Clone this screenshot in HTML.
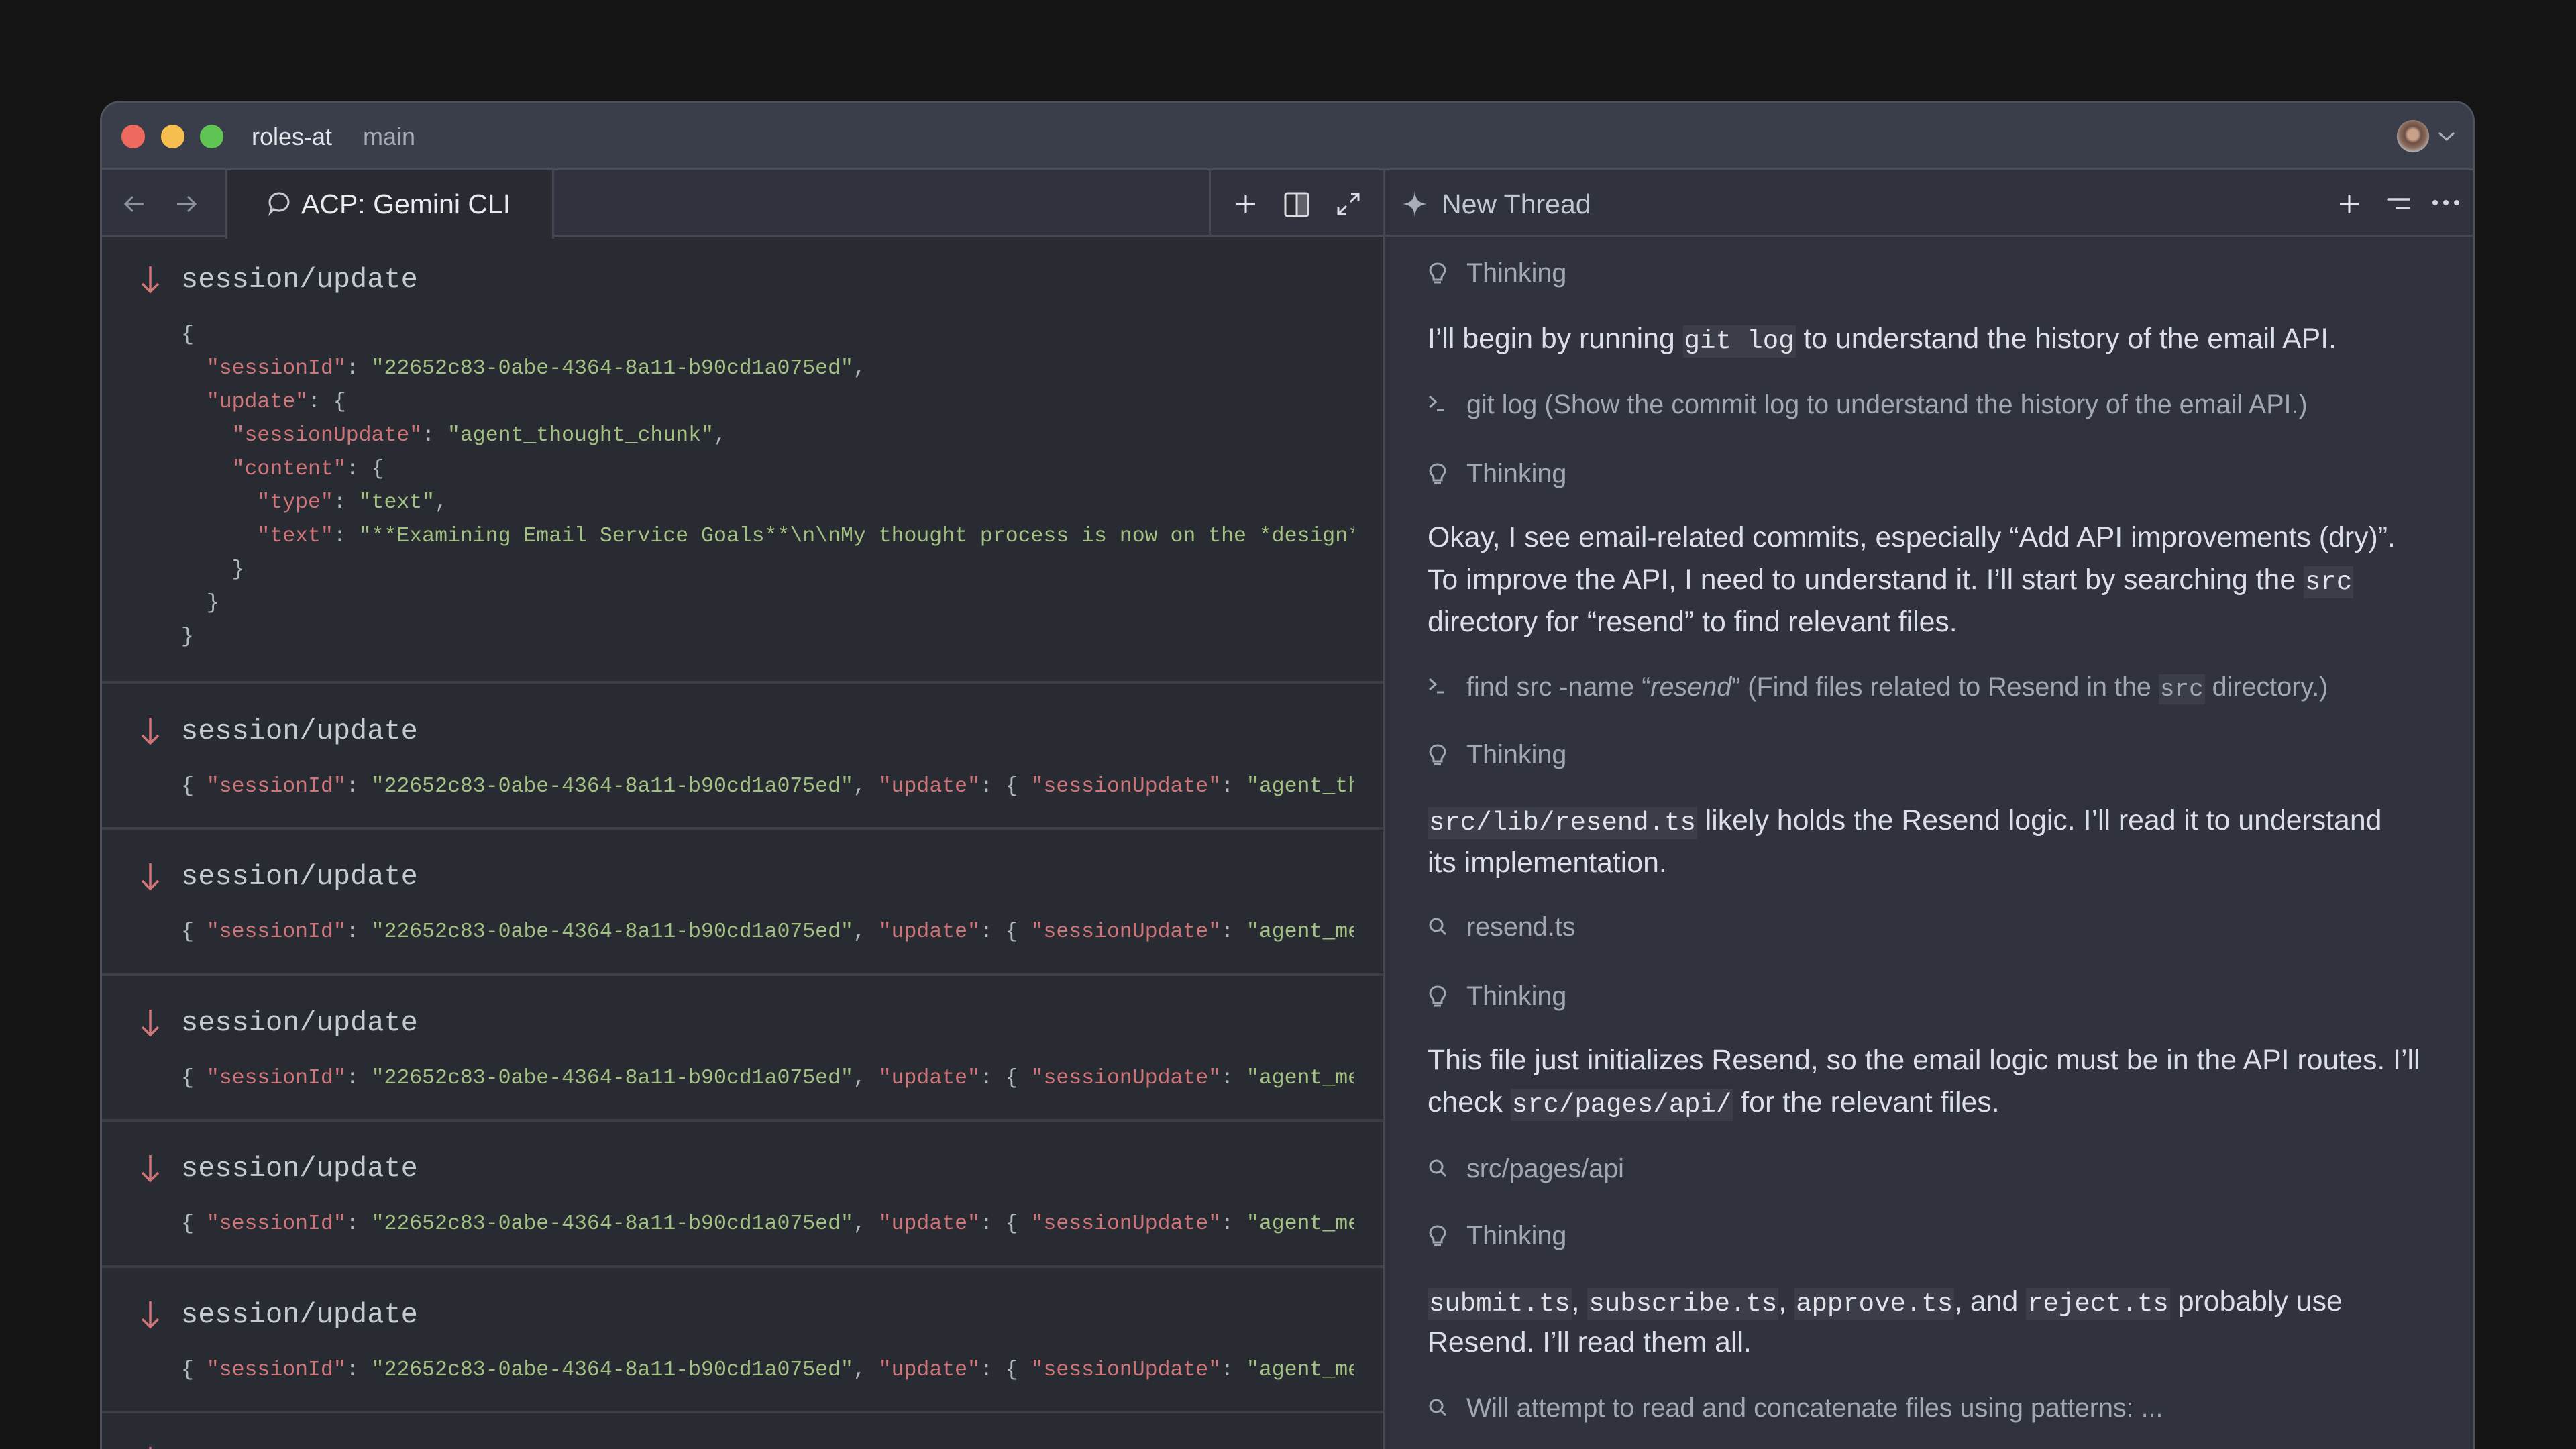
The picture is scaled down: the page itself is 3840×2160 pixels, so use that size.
<!DOCTYPE html>
<html><head><meta charset="utf-8">
<style>
*{margin:0;padding:0;box-sizing:border-box}
html,body{width:3840px;height:2160px;overflow:hidden;background:#141414}
body{position:relative;font-family:"Liberation Sans",sans-serif}
.win{position:absolute;left:149px;top:150px;width:3540px;height:2020px;border-radius:30px 30px 0 0;border:3px solid #4f525b;border-bottom:none;background:#282b31;overflow:hidden}
.title{position:absolute;left:0;top:0;width:100%;height:101px;background:#3a3e4a;border-bottom:3px solid #4a4d57}
.dot{position:absolute;top:33px;width:35px;height:35px;border-radius:50%}
.tabbar{position:absolute;left:0;top:101px;width:1910px;height:99px;background:#30333d;border-bottom:3px solid #454853}
.rp{position:absolute;left:1910px;top:101px;width:1630px;height:1919px;background:#30333e;border-left:3px solid #454853;overflow:hidden}
.rhead{position:absolute;left:0;top:0;width:100%;height:99px;border-bottom:3px solid #454853}
.mono{font-family:"Liberation Mono",monospace}
.l{position:absolute;white-space:pre;}
.lp{position:absolute;left:0;top:200px;width:1910px;height:1820px;overflow:hidden}
.h{font-size:42px;color:#c5c9d1;height:60px;line-height:60px}
.j{font-size:31.5px;color:#b4b8c0;height:50px;line-height:50px;width:1748px;overflow:hidden}
.k{color:#d0757a}.s{color:#a3c183}
.sep{position:absolute;left:0;width:1910px;height:4px;background:#3b3e48}
.arr{position:absolute;left:57px;width:30px;height:44px}
.t{position:absolute;left:63px;white-space:nowrap;font-size:42.8px;color:#dcdfe5;line-height:63px;height:63px}
.m{position:absolute;left:63px;white-space:nowrap;font-size:39.5px;color:#a2a7b2;line-height:60px;height:60px}
.m svg{position:absolute;left:0;top:14px}
.m span.tx{margin-left:58px}
code{font-family:"Liberation Mono",monospace;background:#3b3e49;padding:2px 2px;font-size:39px;color:#e0e3e8}
.m code{font-size:36px;color:#a2a7b2}
</style></head><body>
<div class="win">
  <div class="title">
    <div class="dot" style="left:29px;background:#ee6a5f"></div>
    <div class="dot" style="left:88px;background:#f5be4f"></div>
    <div class="dot" style="left:146px;background:#5fc454"></div>
    <div class="l" style="left:223px;top:26px;font-size:36px;color:#e3e5ea;line-height:50px">roles-at</div>
    <div class="l" style="left:389px;top:26px;font-size:36px;color:#a7abb5;line-height:50px">main</div>
    <div style="position:absolute;left:3421px;top:26px;width:48px;height:48px;border-radius:50%;background:radial-gradient(circle at 50% 45%,#c9a08a 0 22%,#6b5045 35%,#8a6a5a 55%,#b7b9bb 75%,#5a4a44 100%)"></div>
    <svg style="position:absolute;left:3482px;top:40px" width="26" height="20" viewBox="0 0 26 20"><path d="M2 5 L13 15 L24 5" stroke="#a9adb7" stroke-width="3" fill="none"/></svg>
  </div>
  <div class="tabbar">
    <svg style="position:absolute;left:32px;top:36px" width="32" height="28" viewBox="0 0 32 28"><path d="M30 14H4M14 3L3 14L14 25" stroke="#8e929c" stroke-width="3" fill="none"/></svg>
    <svg style="position:absolute;left:110px;top:36px" width="32" height="28" viewBox="0 0 32 28"><path d="M2 14H28M18 3L29 14L18 25" stroke="#8e929c" stroke-width="3" fill="none"/></svg>
    <div style="position:absolute;left:184px;top:0;width:490px;height:102px;background:#282b31;border-left:3px solid #454853;border-right:3px solid #454853"></div>
    <svg style="position:absolute;left:246px;top:30px" width="36" height="40" viewBox="0 0 36 40"><path d="M18 4C26 4 32 10 32 17C32 24 26 30 18 30C15 30 12 29 10 28L5 33L7 26C5 24 4 21 4 17C4 10 10 4 18 4Z" stroke="#c9ccd3" stroke-width="3" fill="none"/></svg>
    <div class="l" style="left:297px;top:20px;font-size:41px;color:#e9ebef;line-height:60px">ACP: Gemini CLI</div>
    <div style="position:absolute;left:1650px;top:0;width:3px;height:99px;background:#454853"></div>
    <svg style="position:absolute;left:1688px;top:33px" width="34" height="34" viewBox="0 0 34 34"><path d="M17 3V31M3 17H31" stroke="#dfe2e7" stroke-width="3"/></svg>
    <svg style="position:absolute;left:1762px;top:32px" width="38" height="38" viewBox="0 0 38 38"><rect x="2" y="2" width="34" height="34" rx="3" fill="#2b2e36" stroke="#d8dbe0" stroke-width="3"/><rect x="19" y="3.5" width="15.5" height="31" fill="#5e616a"/><path d="M19 2V36" stroke="#d8dbe0" stroke-width="3"/></svg>
    <svg style="position:absolute;left:1840px;top:32px" width="36" height="36" viewBox="0 0 36 36"><path d="M21 15L33 3M22 3H33V14M15 21L3 33M3 22V33H14" stroke="#d8dbe0" stroke-width="3" fill="none"/></svg>
  </div>
  <div class="lp">
    <svg class="arr" style="top:42px" viewBox="0 0 30 44"><path d="M15 2V40M3 28L15 40L27 28" stroke="#d0757a" stroke-width="3.5" fill="none"/></svg>
    <div class="l mono h" style="left:118px;top:34px">session/update</div>
    <div class="l mono j" style="left:118px;top:122px">{</div>
    <div class="l mono j" style="left:118px;top:172px">  <span class="k">"sessionId"</span>: <span class="s">"22652c83-0abe-4364-8a11-b90cd1a075ed"</span>,</div>
    <div class="l mono j" style="left:118px;top:222px">  <span class="k">"update"</span>: {</div>
    <div class="l mono j" style="left:118px;top:272px">    <span class="k">"sessionUpdate"</span>: <span class="s">"agent_thought_chunk"</span>,</div>
    <div class="l mono j" style="left:118px;top:322px">    <span class="k">"content"</span>: {</div>
    <div class="l mono j" style="left:118px;top:372px">      <span class="k">"type"</span>: <span class="s">"text"</span>,</div>
    <div class="l mono j" style="left:118px;top:422px">      <span class="k">"text"</span>: <span class="s">"**Examining Email Service Goals**\n\nMy thought process is now on the *design* of the service</span></div>
    <div class="l mono j" style="left:118px;top:472px">    }</div>
    <div class="l mono j" style="left:118px;top:522px">  }</div>
    <div class="l mono j" style="left:118px;top:572px">}</div>
    <div class="sep" style="top:662px"></div>

    <svg class="arr" style="top:715px" viewBox="0 0 30 44"><path d="M15 2V40M3 28L15 40L27 28" stroke="#d0757a" stroke-width="3.5" fill="none"/></svg>
    <div class="l mono h" style="left:118px;top:707px">session/update</div>
    <div class="l mono j" style="left:118px;top:795px">{ <span class="k">"sessionId"</span>: <span class="s">"22652c83-0abe-4364-8a11-b90cd1a075ed"</span>, <span class="k">"update"</span>: { <span class="k">"sessionUpdate"</span>: <span class="s">"agent_thought_chunk"</span></div>
    <div class="sep" style="top:880px"></div>

    <svg class="arr" style="top:932px" viewBox="0 0 30 44"><path d="M15 2V40M3 28L15 40L27 28" stroke="#d0757a" stroke-width="3.5" fill="none"/></svg>
    <div class="l mono h" style="left:118px;top:924px">session/update</div>
    <div class="l mono j" style="left:118px;top:1012px">{ <span class="k">"sessionId"</span>: <span class="s">"22652c83-0abe-4364-8a11-b90cd1a075ed"</span>, <span class="k">"update"</span>: { <span class="k">"sessionUpdate"</span>: <span class="s">"agent_message_chunk"</span></div>
    <div class="sep" style="top:1098px"></div>

    <svg class="arr" style="top:1150px" viewBox="0 0 30 44"><path d="M15 2V40M3 28L15 40L27 28" stroke="#d0757a" stroke-width="3.5" fill="none"/></svg>
    <div class="l mono h" style="left:118px;top:1142px">session/update</div>
    <div class="l mono j" style="left:118px;top:1230px">{ <span class="k">"sessionId"</span>: <span class="s">"22652c83-0abe-4364-8a11-b90cd1a075ed"</span>, <span class="k">"update"</span>: { <span class="k">"sessionUpdate"</span>: <span class="s">"agent_message_chunk"</span></div>
    <div class="sep" style="top:1315px"></div>

    <svg class="arr" style="top:1367px" viewBox="0 0 30 44"><path d="M15 2V40M3 28L15 40L27 28" stroke="#d0757a" stroke-width="3.5" fill="none"/></svg>
    <div class="l mono h" style="left:118px;top:1359px">session/update</div>
    <div class="l mono j" style="left:118px;top:1447px">{ <span class="k">"sessionId"</span>: <span class="s">"22652c83-0abe-4364-8a11-b90cd1a075ed"</span>, <span class="k">"update"</span>: { <span class="k">"sessionUpdate"</span>: <span class="s">"agent_message_chunk"</span></div>
    <div class="sep" style="top:1533px"></div>

    <svg class="arr" style="top:1585px" viewBox="0 0 30 44"><path d="M15 2V40M3 28L15 40L27 28" stroke="#d0757a" stroke-width="3.5" fill="none"/></svg>
    <div class="l mono h" style="left:118px;top:1577px">session/update</div>
    <div class="l mono j" style="left:118px;top:1665px">{ <span class="k">"sessionId"</span>: <span class="s">"22652c83-0abe-4364-8a11-b90cd1a075ed"</span>, <span class="k">"update"</span>: { <span class="k">"sessionUpdate"</span>: <span class="s">"agent_message_chunk"</span></div>
    <div class="sep" style="top:1750px"></div>

    <svg class="arr" style="top:1802px" viewBox="0 0 30 44"><path d="M15 2V40M3 28L15 40L27 28" stroke="#d0757a" stroke-width="3.5" fill="none"/></svg>
  </div>

  <div class="rp">
    <div class="rhead">
      <svg style="position:absolute;left:24px;top:28px" width="40" height="44" viewBox="0 0 40 44"><path d="M20 2C21 15 25 20 38 22C25 24 21 29 20 42C19 29 15 24 2 22C15 20 19 15 20 2Z" fill="#a9adb7"/></svg>
      <div class="l" style="left:84px;top:20px;font-size:41px;color:#c2c6ce;line-height:60px">New Thread</div>
      <svg style="position:absolute;left:1420px;top:33px" width="34" height="34" viewBox="0 0 34 34"><path d="M17 3V31M3 17H31" stroke="#dfe2e7" stroke-width="3"/></svg>
      <svg style="position:absolute;left:1493px;top:36px" width="36" height="28" viewBox="0 0 36 28"><path d="M3 7H33M15 20H33" stroke="#d4d7dd" stroke-width="3.5" stroke-linecap="round"/></svg>
      <svg style="position:absolute;left:1559px;top:40px" width="44" height="16" viewBox="0 0 44 16"><circle cx="6" cy="8" r="4" fill="#d4d7dd"/><circle cx="22" cy="8" r="4" fill="#d4d7dd"/><circle cx="38" cy="8" r="4" fill="#d4d7dd"/></svg>
    </div>
    <div class="m" style="top:123px"><svg width="30" height="34" viewBox="0 0 30 34"><path d="M15 2C8 2 4 7 4 12C4 17 9 19 9 23V26H21V23C21 19 26 17 26 12C26 7 22 2 15 2ZM10 30H20" stroke="#a2a7b2" stroke-width="3" fill="none"/></svg><span class="tx">Thinking</span></div>
    <div class="t" style="top:220px">I’ll begin by running <code>git log</code> to understand the history of the email API.</div>
    <div class="m" style="top:319px"><svg width="34" height="30" viewBox="0 0 34 30"><path d="M3 4L12 12L3 20M14 24H24" stroke="#a2a7b2" stroke-width="3" fill="none"/></svg><span class="tx">git log (Show the commit log to understand the history of the email API.)</span></div>
    <div class="m" style="top:422px"><svg width="30" height="34" viewBox="0 0 30 34"><path d="M15 2C8 2 4 7 4 12C4 17 9 19 9 23V26H21V23C21 19 26 17 26 12C26 7 22 2 15 2ZM10 30H20" stroke="#a2a7b2" stroke-width="3" fill="none"/></svg><span class="tx">Thinking</span></div>
    <div class="t" style="top:516px">Okay, I see email-related commits, especially “Add API improvements (dry)”.</div>
    <div class="t" style="top:579px">To improve the API, I need to understand it. I’ll start by searching the <code>src</code></div>
    <div class="t" style="top:642px">directory for “resend” to find relevant files.</div>
    <div class="m" style="top:740px"><svg width="34" height="30" viewBox="0 0 34 30"><path d="M3 4L12 12L3 20M14 24H24" stroke="#a2a7b2" stroke-width="3" fill="none"/></svg><span class="tx">find src -name “<i>resend</i>” (Find files related to Resend in the <code>src</code> directory.)</span></div>
    <div class="m" style="top:841px"><svg width="30" height="34" viewBox="0 0 30 34"><path d="M15 2C8 2 4 7 4 12C4 17 9 19 9 23V26H21V23C21 19 26 17 26 12C26 7 22 2 15 2ZM10 30H20" stroke="#a2a7b2" stroke-width="3" fill="none"/></svg><span class="tx">Thinking</span></div>
    <div class="t" style="top:938px"><code>src/lib/resend.ts</code> likely holds the Resend logic. I’ll read it to understand</div>
    <div class="t" style="top:1001px">its implementation.</div>
    <div class="m" style="top:1098px"><svg width="30" height="30" viewBox="0 0 30 30"><circle cx="13" cy="13" r="9" stroke="#a2a7b2" stroke-width="3" fill="none"/><path d="M20 20L27 27" stroke="#a2a7b2" stroke-width="3"/></svg><span class="tx">resend.ts</span></div>
    <div class="m" style="top:1201px"><svg width="30" height="34" viewBox="0 0 30 34"><path d="M15 2C8 2 4 7 4 12C4 17 9 19 9 23V26H21V23C21 19 26 17 26 12C26 7 22 2 15 2ZM10 30H20" stroke="#a2a7b2" stroke-width="3" fill="none"/></svg><span class="tx">Thinking</span></div>
    <div class="t" style="top:1295px">This file just initializes Resend, so the email logic must be in the API routes. I’ll</div>
    <div class="t" style="top:1358px">check <code>src/pages/api/</code> for the relevant files.</div>
    <div class="m" style="top:1458px"><svg width="30" height="30" viewBox="0 0 30 30"><circle cx="13" cy="13" r="9" stroke="#a2a7b2" stroke-width="3" fill="none"/><path d="M20 20L27 27" stroke="#a2a7b2" stroke-width="3"/></svg><span class="tx">src/pages/api</span></div>
    <div class="m" style="top:1558px"><svg width="30" height="34" viewBox="0 0 30 34"><path d="M15 2C8 2 4 7 4 12C4 17 9 19 9 23V26H21V23C21 19 26 17 26 12C26 7 22 2 15 2ZM10 30H20" stroke="#a2a7b2" stroke-width="3" fill="none"/></svg><span class="tx">Thinking</span></div>
    <div class="t" style="top:1655px"><code>submit.ts</code>, <code>subscribe.ts</code>, <code>approve.ts</code>, and <code>reject.ts</code> probably use</div>
    <div class="t" style="top:1716px">Resend. I’ll read them all.</div>
    <div class="m" style="top:1815px"><svg width="30" height="30" viewBox="0 0 30 30"><circle cx="13" cy="13" r="9" stroke="#a2a7b2" stroke-width="3" fill="none"/><path d="M20 20L27 27" stroke="#a2a7b2" stroke-width="3"/></svg><span class="tx">Will attempt to read and concatenate files using patterns: ...</span></div>
  </div>
</div>
</body></html>
